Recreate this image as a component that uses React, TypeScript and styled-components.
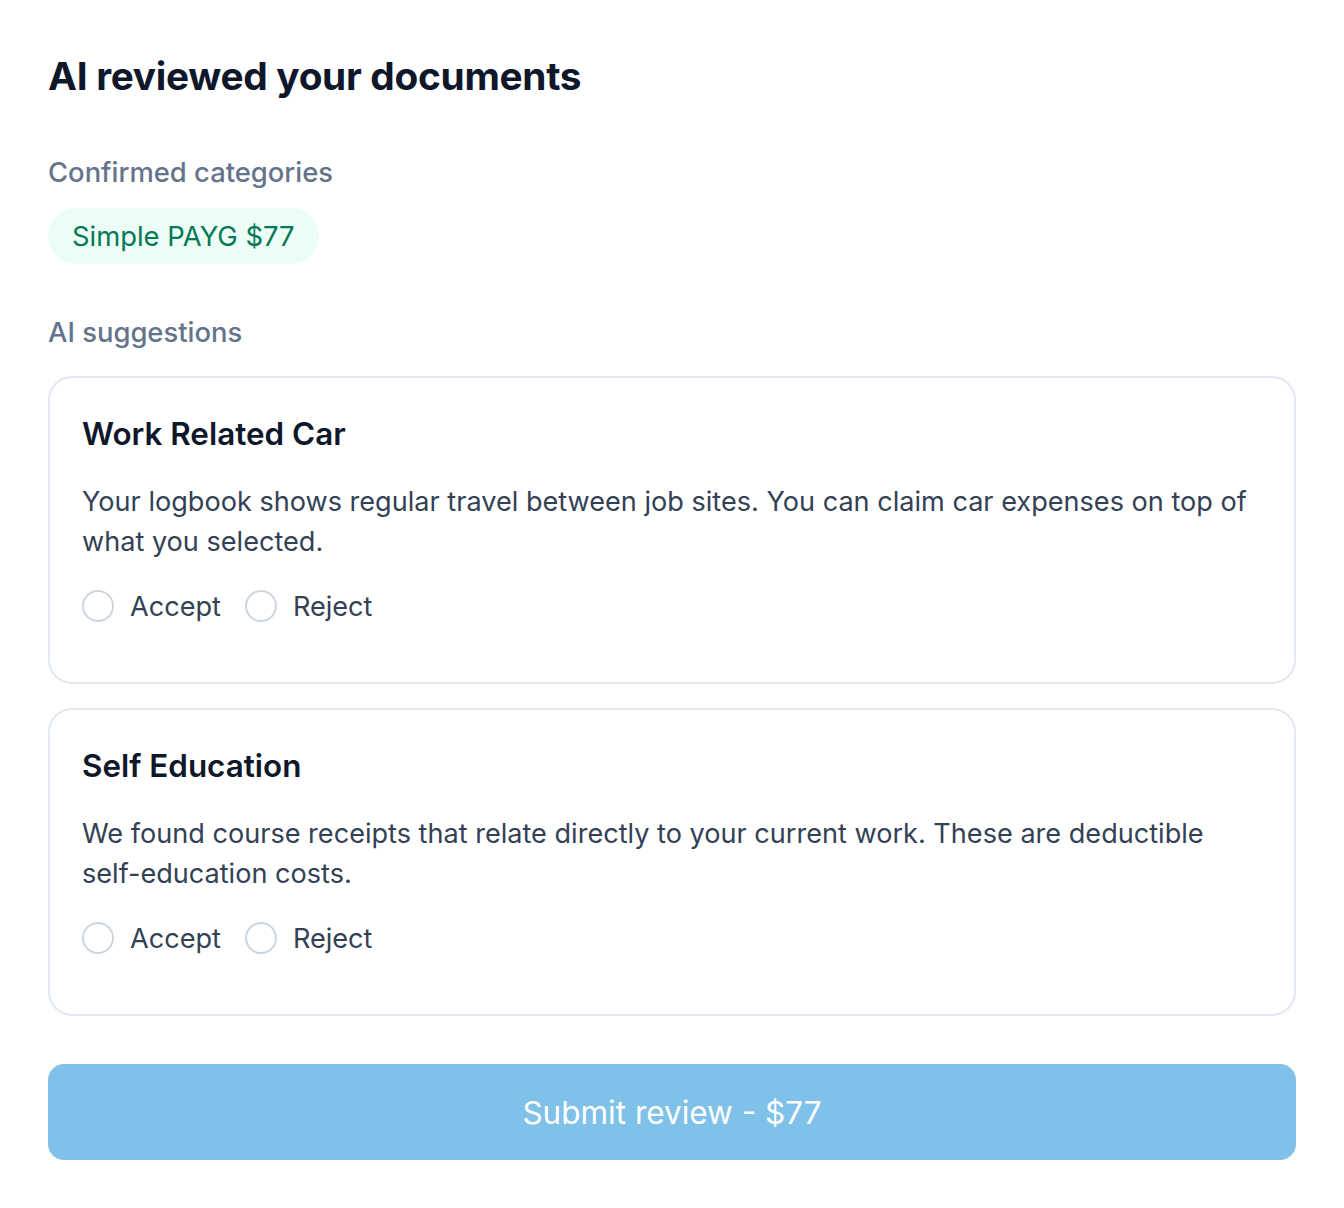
import React, { useState } from "react";
import styled, { createGlobalStyle } from "styled-components";

const GlobalStyle = createGlobalStyle`
  * { box-sizing: border-box; }
  body {
    margin: 0;
    background: #ffffff;
    font-family: Inter, "Noto Sans", "Liberation Sans", sans-serif;
    -webkit-font-smoothing: antialiased;
  }
`;

interface Suggestion {
  id: string;
  title: string;
  description: string;
}

const suggestions: Suggestion[] = [
  {
    id: "car",
    title: "Work Related Car",
    description:
      "Your logbook shows regular travel between job sites. You can claim car expenses on top of what you selected.",
  },
  {
    id: "education",
    title: "Self Education",
    description:
      "We found course receipts that relate directly to your current work. These are deductible self-education costs.",
  },
];

const SuggestionCard = ({ item }: { item: Suggestion }) => {
  const [choice, setChoice] = useState<string>("");

  return (
    <Card>
      <CardTitle>{item.title}</CardTitle>
      <CardText>{item.description}</CardText>
      <RadioGroup>
        {["Accept", "Reject"].map((option) => (
          <RadioLabel key={option}>
            <RadioInput
              type="radio"
              name={item.id}
              checked={choice === option}
              onChange={() => setChoice(option)}
            />
            {option}
          </RadioLabel>
        ))}
      </RadioGroup>
    </Card>
  );
};

const App = () => {
  return (
    <>
      <GlobalStyle />
      <Page>
        <Heading>AI reviewed your documents</Heading>

        <SectionLabel>Confirmed categories</SectionLabel>
        <ChipRow>
          <Chip>Simple PAYG $77</Chip>
        </ChipRow>

        <SectionLabel>AI suggestions</SectionLabel>
        <CardList>
          {suggestions.map((s) => (
            <SuggestionCard key={s.id} item={s} />
          ))}
        </CardList>

        <SubmitButton disabled>Submit review - $77</SubmitButton>
      </Page>
    </>
  );
};

const Page = styled.div`
  padding: 48px;
  display: flex;
  flex-direction: column;
`;

const Heading = styled.h1`
  margin: 0;
  font-size: 38.8px;
  line-height: 56px;
  font-weight: 700;
  color: #0f172a;
  letter-spacing: -0.3px;
`;

const SectionLabel = styled.h2`
  margin: 48px 0 0;
  font-size: 27.4px;
  line-height: 40px;
  font-weight: 500;
  color: #64748b;
`;

const ChipRow = styled.div`
  display: flex;
  gap: 16px;
  margin-top: 16px;
`;

const Chip = styled.span`
  display: inline-flex;
  align-items: center;
  height: 56px;
  padding: 0 24px;
  border-radius: 28px;
  background: #ecfdf5;
  color: #047857;
  font-size: 27.4px;
  font-weight: 400;
`;

const CardList = styled.div`
  display: flex;
  flex-direction: column;
  gap: 24px;
  margin-top: 24px;
`;

const Card = styled.div`
  border: 2px solid #e2e8f0;
  border-radius: 24px;
  padding: 32px 32px 56px;
  background: #ffffff;
`;

const CardTitle = styled.h3`
  margin: 0;
  font-size: 31.4px;
  line-height: 48px;
  font-weight: 600;
  color: #0f172a;
`;

const CardText = styled.p`
  margin: 24px 0 0;
  font-size: 27.1px;
  line-height: 40px;
  color: #334155;
`;

const RadioGroup = styled.div`
  display: flex;
  align-items: center;
  gap: 24px;
  margin-top: 24px;
`;

const RadioLabel = styled.label`
  display: inline-flex;
  align-items: center;
  gap: 16px;
  height: 40px;
  font-size: 27.1px;
  color: #334155;
  cursor: pointer;
`;

const RadioInput = styled.input`
  appearance: none;
  margin: 0;
  width: 32px;
  height: 32px;
  border: 2px solid #cbd5e1;
  border-radius: 50%;
  background: #ffffff;
  cursor: pointer;

  &:checked {
    border: 9px solid #0284c7;
  }
`;

const SubmitButton = styled.button`
  margin-top: 48px;
  height: 96px;
  width: 100%;
  border: none;
  border-radius: 16px;
  background: #7fc1e8;
  color: #ffffff;
  font-family: inherit;
  font-size: 31.5px;
  font-weight: 400;
  cursor: not-allowed;
`;

export default App;
